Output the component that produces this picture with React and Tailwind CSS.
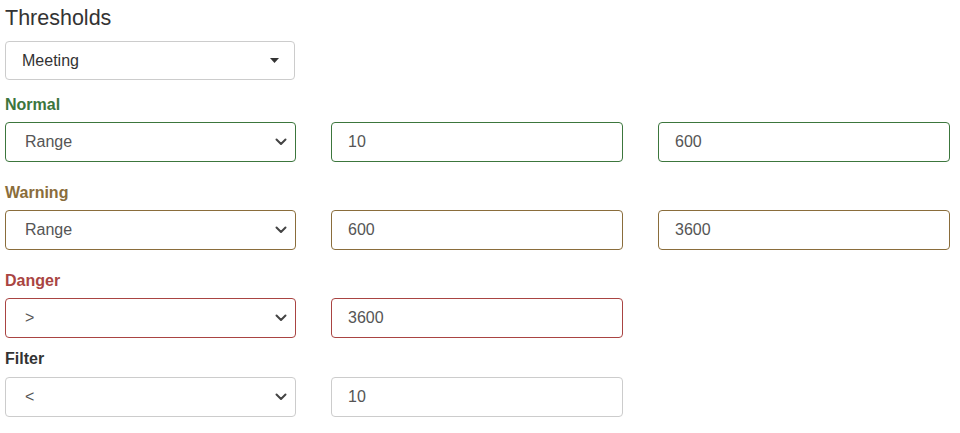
import React from 'react';

const font = { fontFamily: '"Liberation Sans", Arial, sans-serif' };

const Chevron = () => (
  <svg width="12" height="8" viewBox="0 0 12 8" className="shrink-0">
    <path d="M1.5 1.5 L6 6 L10.5 1.5" fill="none" stroke="#444" strokeWidth="2" strokeLinecap="round" strokeLinejoin="round" />
  </svg>
);

const SelectBox = ({ value, border }) => (
  <div className={`flex h-10 items-center justify-between rounded border bg-white pl-[19px] pr-[8px] text-base text-[#555] ${border}`}>
    <span>{value}</span>
    <Chevron />
  </div>
);

const InputBox = ({ value, border }) => (
  <input
    readOnly
    defaultValue={value}
    className={`h-10 w-full rounded border bg-white px-4 text-base text-[#555] outline-none ${border}`}
  />
);

const rows = [
  { label: 'Normal', color: 'text-[#3c763d]', border: 'border-[#3c763d]', op: 'Range', values: ['10', '600'] },
  { label: 'Warning', color: 'text-[#8a6d3b]', border: 'border-[#8a6d3b]', op: 'Range', values: ['600', '3600'] },
  { label: 'Danger', color: 'text-[#a94442]', border: 'border-[#a94442]', op: '>', values: ['3600'] },
];

const ThresholdRow = ({ label, color, border, op, values, className }) => (
  <div className={className}>
    <div className={`h-5 text-base font-bold leading-5 ${color}`}>{label}</div>
    <div className="mt-[7px] grid grid-cols-[291px_292px_292px] gap-x-[35px]">
      <SelectBox value={op} border={border} />
      {values.map((v) => (
        <InputBox key={v} value={v} border={border} />
      ))}
    </div>
  </div>
);

export default function App() {
  return (
    <div className="min-h-[433px] bg-white pl-[5px] text-[#333]" style={font}>
      <h3 className="h-9 text-[21.5px] leading-9">Thresholds</h3>
      <div className="mt-[5px] flex h-[39px] w-[290px] items-center justify-between rounded border border-[#ccc] bg-white pl-4 pr-[15px] text-base text-[#333]">
        <span>Meeting</span>
        <svg width="9" height="5" viewBox="0 0 9 5">
          <path d="M0 0 H9 L4.5 5 Z" fill="#333" />
        </svg>
      </div>
      {rows.map((r, i) => (
        <ThresholdRow key={r.label} {...r} className={i === 0 ? 'mt-[15px]' : 'mt-[21px]'} />
      ))}
      <div className="mt-[11px]">
        <div className="h-5 text-base font-bold leading-5 text-[#333]">Filter</div>
        <div className="mt-[8px] grid grid-cols-[291px_292px_292px] gap-x-[35px]">
          <SelectBox value="<" border="border-[#ccc]" />
          <InputBox value="10" border="border-[#ccc]" />
        </div>
      </div>
    </div>
  );
}
